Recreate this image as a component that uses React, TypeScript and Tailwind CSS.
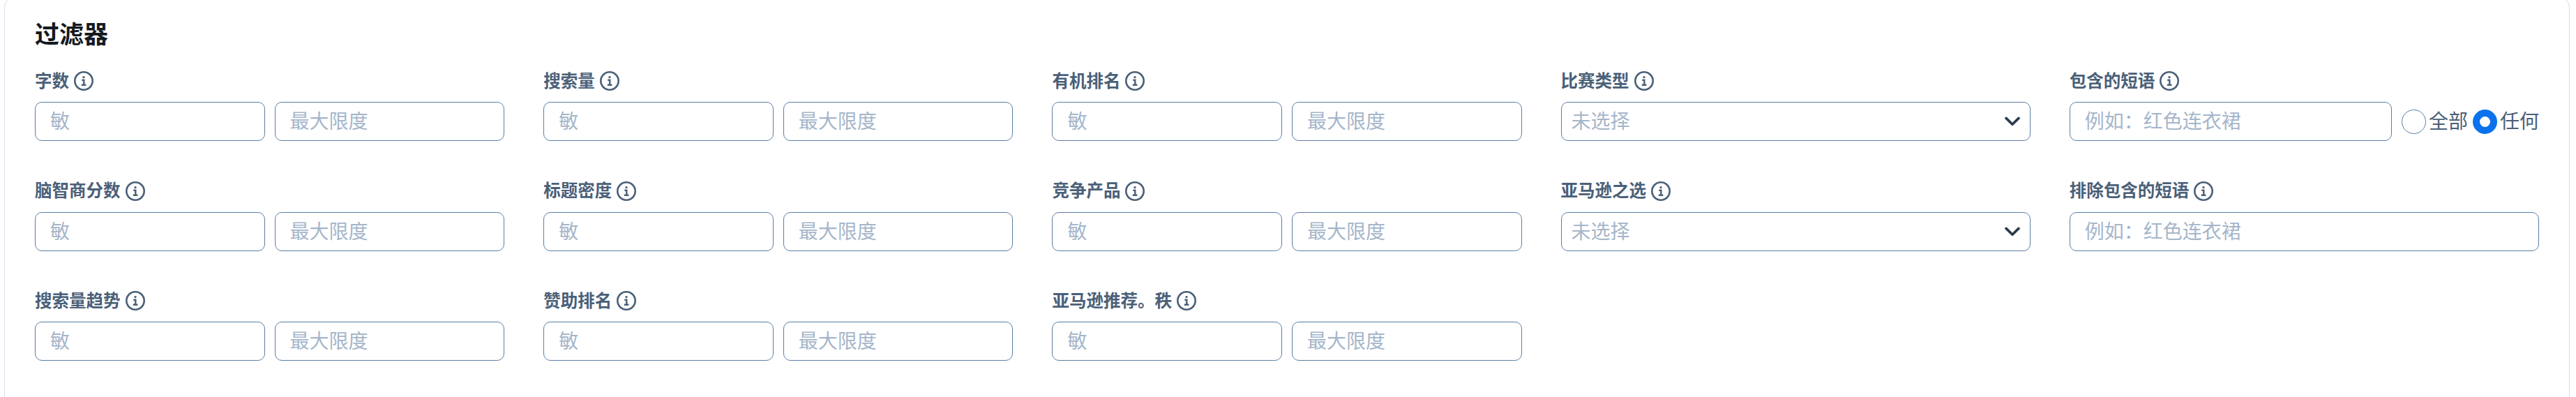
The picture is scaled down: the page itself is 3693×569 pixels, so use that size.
import { useState } from "react";

type Field = {
  label: string;
  kind: "range" | "select" | "phrase" | "phraseMatch";
};

const fields: Field[] = [
  { label: "字数", kind: "range" },
  { label: "搜索量", kind: "range" },
  { label: "有机排名", kind: "range" },
  { label: "比赛类型", kind: "select" },
  { label: "包含的短语", kind: "phraseMatch" },
  { label: "脑智商分数", kind: "range" },
  { label: "标题密度", kind: "range" },
  { label: "竞争产品", kind: "range" },
  { label: "亚马逊之选", kind: "select" },
  { label: "排除包含的短语", kind: "phrase" },
  { label: "搜索量趋势", kind: "range" },
  { label: "赞助排名", kind: "range" },
  { label: "亚马逊推荐。秩", kind: "range" },
];

function InfoIcon() {
  return (
    <svg className="size-7 shrink-0" viewBox="0 0 28 28" fill="none" stroke="#4a6078">
      <circle cx="14" cy="14" r="12.7" strokeWidth="2.6" />
      <circle cx="14" cy="8.6" r="1.7" fill="#4a6078" stroke="none" />
      <path d="M11.3 12.8H14.3V19.8M10.8 19.8H17.4" strokeWidth="2.4" />
    </svg>
  );
}

function TextInput({ placeholder }: { placeholder: string }) {
  return (
    <input
      type="text"
      placeholder={placeholder}
      className="h-14 w-full min-w-0 flex-1 rounded-[10px] border border-[#5b7ea3] bg-white px-[21px] pb-1 text-[28px] text-[#4a6078] outline-none placeholder:text-[#a5b6ca]"
    />
  );
}

function Select() {
  return (
    <button className="flex h-14 w-full items-center justify-between rounded-[10px] border border-[#5b7ea3] bg-white px-[14px] text-[28px] text-[#a5b6ca]">
      <span className="pb-1">未选择</span>
      <svg className="h-[14px] w-[22px]" viewBox="0 0 22 14" fill="none" stroke="#2b3a4d" strokeWidth="3.6" strokeLinecap="round" strokeLinejoin="round">
        <path d="M2 2.4L11 11.2L20 2.4" />
      </svg>
    </button>
  );
}

function Radio({ label, checked, onSelect }: { label: string; checked: boolean; onSelect: () => void }) {
  return (
    <button onClick={onSelect} className="flex shrink-0 items-center gap-1 text-[28px] text-[#4a6078]">
      <span className={checked ? "size-[35px] rounded-full border-10 border-[#0b72ee] bg-white" : "size-[35px] rounded-full border border-[#5b7ea3] bg-white"} />
      <span className="pb-1">{label}</span>
    </button>
  );
}

function Control({ kind }: { kind: Field["kind"] }) {
  const [match, setMatch] = useState("任何");

  if (kind === "select") return <Select />;
  if (kind === "range") {
    return (
      <div className="flex gap-[14px]">
        <TextInput placeholder="敏" />
        <TextInput placeholder="最大限度" />
      </div>
    );
  }
  return (
    <div className="flex items-center">
      <TextInput placeholder="例如：红色连衣裙" />
      {kind === "phraseMatch" && (
        <div className="ml-[14px] flex gap-[7px]">
          {["全部", "任何"].map((m) => (
            <Radio key={m} label={m} checked={match === m} onSelect={() => setMatch(m)} />
          ))}
        </div>
      )}
    </div>
  );
}

export default function App() {
  return (
    <div className="h-[569px] overflow-hidden bg-white pr-[9px] pl-[6px] font-['Noto_Sans_CJK_SC',sans-serif]">
      <div className="-mt-1 h-[600px] rounded-[14px] border border-[#d5dde8] px-[43px] pt-6">
        <h1 className="text-[35px] leading-[52px] font-bold text-[#15191f]">过滤器</h1>
        <div className="mt-[21px] grid grid-cols-5 gap-x-14 gap-y-[49.7px]">
          {fields.map((f) => (
            <div key={f.label}>
              <div className="mb-2 flex h-11 items-center gap-[7px]">
                <span className="pb-[3px] text-[24.5px] leading-9 font-bold text-[#4a6078]">{f.label}</span>
                <InfoIcon />
              </div>
              <Control kind={f.kind} />
            </div>
          ))}
        </div>
      </div>
    </div>
  );
}
